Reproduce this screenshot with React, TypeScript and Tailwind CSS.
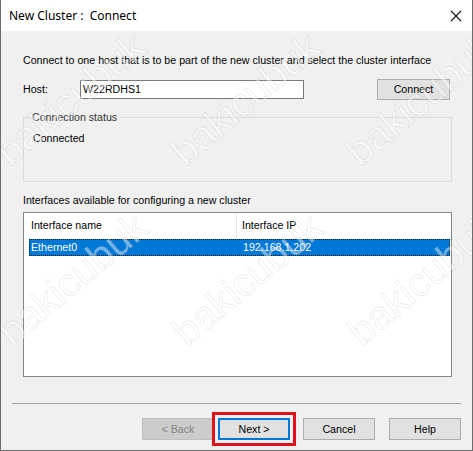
import React from "react";

const marks: { x: number; y: number }[] = [
  { x: 13, y: 172 },
  { x: 188, y: 172 },
  { x: 363, y: 172 },
  { x: 15, y: 352 },
  { x: 190, y: 352 },
  { x: 365, y: 352 },
];

function Btn({
  children,
  disabled,
  primary,
}: {
  children: React.ReactNode;
  disabled?: boolean;
  primary?: boolean;
}) {
  if (disabled)
    return (
      <div className="w-[72px] h-[22px] flex items-center justify-center bg-[#cccccc] border border-[#bfbfbf] text-[#838383]">
        {children}
      </div>
    );
  if (primary)
    return (
      <div className="w-[72px] h-[22px] flex items-center justify-center bg-[#e1e1e1] border-2 border-[#0078d7] text-black outline-[3px] outline-solid outline-[#e0131a] outline-offset-[3px]">
        {children}
      </div>
    );
  return (
    <div className="w-[72px] h-[22px] flex items-center justify-center bg-[#e1e1e1] border border-[#adadad] text-black">
      {children}
    </div>
  );
}

export default function App() {
  return (
    <div
      className="relative w-[473px] h-[451px] overflow-hidden border-x border-b border-[#6d6d6d] bg-[#f0f0f0] text-[10.65px] leading-[13px] text-black"
      style={{ fontFamily: '"Liberation Sans", Arial, sans-serif' }}
    >
      {/* Title bar */}
      <div className="h-[31px] bg-white flex items-center justify-between pl-[8px] pr-[9px]">
        <span
          className="text-[12px] text-black"
          style={{ fontFamily: '"Noto Sans", "Open Sans", sans-serif' }}
        >
          New Cluster :&nbsp; Connect
        </span>
        <svg width="12" height="12" viewBox="0 0 12 12" className="mr-[1px]">
          <path d="M1 1 L11 11 M11 1 L1 11" stroke="#111" strokeWidth="1.1" />
        </svg>
      </div>

      {/* Body */}
      <div className="flex flex-col pl-[22px] pr-[20px]">
        <div className="mt-[23px] h-[13px] whitespace-nowrap">
          Connect to one host that is to be part of the new cluster and select the cluster interface
        </div>

        <div className="mt-[12px] h-[21px] flex items-center">
          <span className="w-[57px]">Host:</span>
          <div className="w-[224px] h-[19px] bg-white border border-[#7a7a7a] flex items-center pl-[2px]">
            W22RDHS1
          </div>
          <div className="flex-1" />
          <div className="mr-[2px] w-[73px] h-[21px] flex items-center justify-center bg-[#e1e1e1] border border-[#adadad]">
            Connect
          </div>
        </div>

        <div className="relative mt-[17px] h-[65px] border border-[#dcdcdc]">
          <span className="absolute left-[6px] top-[-7px] bg-[#f0f0f0] px-[2px] text-[#333]">
            Connection status
          </span>
          <div className="pl-[9px] pt-[14px]">Connected</div>
        </div>

        <div className="mt-[12px] h-[13px]">Interfaces available for configuring a new cluster</div>

        <div className="mt-[5px] h-[165px] bg-white border border-[#828790] flex flex-col">
          <div className="h-[24px] flex">
            <div className="w-[213px] border-r border-[#e5e5e5] flex items-center pl-[7px]">Interface name</div>
            <div className="flex-1 flex items-center pl-[5px]">Interface IP</div>
          </div>
          <div className="mt-[2px] ml-[5px] mr-[1px] h-[17px] bg-[#0078d7] text-white flex items-center border border-dotted border-[#1a1a1a]">
            <div className="w-[207px] pl-[1px]">Ethernet0</div>
            <div className="pl-[6px]">192.168.1.202</div>
          </div>
        </div>
      </div>

      <div className="mx-[11px] mt-[26px] h-[1px] bg-[#a0a0a0]" />

      <div className="mt-[14px] flex justify-end pr-[11px] gap-[13px]">
        <div className="flex gap-[4px]">
          <Btn disabled>&lt; Back</Btn>
          <Btn primary>Next &gt;</Btn>
        </div>
        <Btn>Cancel</Btn>
        <div className="ml-[1px]">
          <Btn>Help</Btn>
        </div>
      </div>

      {/* watermark */}
      {marks.map((m, i) => (
        <span
          key={i}
          className="pointer-events-none absolute text-[40px] leading-none whitespace-nowrap"
          style={{
            left: m.x,
            top: m.y - 40,
            transform: "rotate(-40deg)",
            transformOrigin: "left bottom",
            color: "rgba(255,255,255,0.45)",
            WebkitTextStroke: "0.7px rgba(150,150,150,0.22)",
            fontFamily: '"Liberation Sans", Arial, sans-serif',
          }}
        >
          bakicubuk
        </span>
      ))}
    </div>
  );
}
